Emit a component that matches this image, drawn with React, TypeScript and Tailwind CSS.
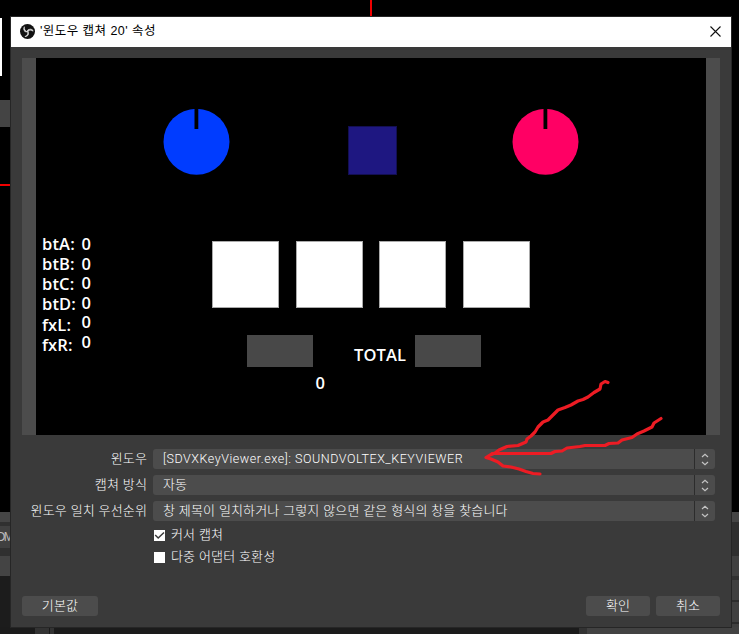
import React from "react";

const UI_FONT = "font-['Liberation_Sans','Noto_Sans_CJK_KR',sans-serif]";

const counters = [
  { name: "btA:", label: "top-[177px]", value: "top-[177px]" },
  { name: "btB:", label: "top-[197px]", value: "top-[197px]" },
  { name: "btC:", label: "top-[217px]", value: "top-[216px]" },
  { name: "btD:", label: "top-[237px]", value: "top-[236px]" },
  { name: "fxL:", label: "top-[258px]", value: "top-[255px]" },
  { name: "fxR:", label: "top-[278px]", value: "top-[275px]" },
];

function ObsLogo() {
  return (
    <svg viewBox="0 0 24 24" className="size-[15px]">
      <circle cx="12" cy="12" r="12" fill="#111" />
      <g fill="none" stroke="#d8d8d8" strokeWidth="1.8" strokeLinecap="round">
        <path d="M12.500 12.500C8.500 12 6 9 6.800 5" />
        <path d="M12.500 12.500C8.500 12 6 9 6.800 5" transform="rotate(120 12 12)" />
        <path d="M12.500 12.500C8.500 12 6 9 6.800 5" transform="rotate(240 12 12)" />
      </g>
      <g fill="#d4d4d4">
        <path d="M6 5C6 9 8 12.500 12 12.500C9 14.500 3.800 10.500 6 5Z" />
        <path d="M6 5C6 9 8 12.500 12 12.500C9 14.500 3.800 10.500 6 5Z" transform="rotate(120 12 12)" />
        <path d="M6 5C6 9 8 12.500 12 12.500C9 14.500 3.800 10.500 6 5Z" transform="rotate(240 12 12)" />
      </g>
    </svg>
  );
}

function Knob({ color, className }: { color: string; className: string }) {
  return (
    <svg viewBox="0 0 67 67" className={`absolute size-[67px] ${className}`}>
      <circle cx="33.500" cy="33.700" r="33" fill={color} />
      <path d="M31.500 0H35.300V21H31.500Z" fill="#000" />
    </svg>
  );
}

/* Main window showing through behind the dialog. */
function Backdrop() {
  return (
    <div className="absolute inset-0 bg-black">
      <div className="absolute left-[370px] top-0 h-4 w-[2px] bg-[#f00000]" />
      <div className="absolute left-0 top-[18px] h-[58px] w-[2px] bg-white" />
      <div className="absolute left-0 top-[100px] h-[27px] w-[11px] bg-[#444]" />
      <div className="absolute left-0 top-[184px] h-[2px] w-[11px] bg-[#f00000]" />
      <div className="absolute left-0 top-[512px] flex h-[122px] w-[11px] flex-col bg-[#1c1c1c]">
        <div className="h-[10px] shrink-0 bg-[#454545]" />
        <div className="h-1 shrink-0 bg-[#303030]" />
        <div className="flex h-[22px] shrink-0 items-center bg-[#404040] text-[12px] tracking-[-1.5px] text-[#bbb]">
          <span className="-ml-[4px]">OM</span>
        </div>
        <div className="h-2 shrink-0 bg-[#303030]" />
        <div className="h-5 shrink-0 bg-[#444]" />
      </div>
      <div className="absolute left-[731px] top-[512px] flex h-[122px] w-2 flex-col bg-[#2f2f2f]">
        <div className="h-[10px] shrink-0 bg-[#454545]" />
        <div className="h-[34px] shrink-0 bg-[#2f2f2f]" />
        <div className="h-5 shrink-0 bg-[#404040]" />
        <div className="h-1 shrink-0 bg-[#303030]" />
        <div className="h-5 shrink-0 bg-[#404040]" />
        <div className="h-[2px] shrink-0 bg-[#2c2c2c]" />
        <div className="h-5 shrink-0 bg-[#404040]" />
        <div className="h-[2px] shrink-0 bg-[#2c2c2c]" />
        <div className="h-[10px] shrink-0 bg-[#404040]" />
      </div>
      <div className="absolute left-0 top-[627px] flex h-[7px] w-[739px] bg-[#1b1b1b]">
        <div className="ml-[35px] w-[14px] bg-[#333]" />
        <div className="ml-px w-1 bg-[#333]" />
        <div className="ml-[525px] w-2 bg-[#333]" />
        <div className="flex-1 bg-[#424242]" />
      </div>
    </div>
  );
}

/* Captured key viewer: a free canvas with placed sources. */
function Preview() {
  return (
    <div className="flex h-[377px] justify-center bg-[#4c4c4c]">
      <div className="relative w-[670px] bg-black font-['Open_Sans','Noto_Sans',sans-serif] text-[16.5px] leading-[18px] font-semibold text-white">
        <Knob color="#003cff" className="left-[127px] top-[50px]" />
        <Knob color="#ff0064" className="left-[476px] top-[50px]" />
        <div className="absolute left-[312px] top-[68px] size-[49px] border border-[#130f52] bg-[#1e1781]" />
        {counters.map((c) => (
          <React.Fragment key={c.name}>
            <span className={`absolute left-[6px] ${c.label}`}>{c.name}</span>
            <span className={`absolute left-[45.5px] ${c.value}`}>0</span>
          </React.Fragment>
        ))}
        <div className="absolute left-[176px] top-[183px] flex gap-[16.7px]">
          <div className="size-[67px] border border-[#aaa] bg-white" />
          <div className="size-[67px] border border-[#aaa] bg-white" />
          <div className="size-[67px] border border-[#aaa] bg-white" />
          <div className="size-[67px] border border-[#aaa] bg-white" />
        </div>
        <div className="absolute left-[211px] top-[277px] h-[32px] w-[66px] bg-[#484848]" />
        <div className="absolute left-[379px] top-[277px] h-[32px] w-[66px] bg-[#484848]" />
        <span className="absolute left-[318px] top-[288px]">TOTAL</span>
        <span className="absolute left-[279.5px] top-[316px]">0</span>
      </div>
    </div>
  );
}

function SelectRow({ label, children }: { label: string; children: React.ReactNode }) {
  return (
    <div className="flex h-5 items-center">
      <div className="flex w-[125px] justify-end whitespace-nowrap">{label}</div>
      <div className="ml-[6px] flex h-5 w-[562px] overflow-hidden rounded-[3px] bg-[#4c4c4c]">
        <div className="flex flex-1 items-center pl-[10px] whitespace-nowrap">{children}</div>
        <div className="flex w-[21px] items-center justify-center border-l border-[#2c2c2c]">
          <svg viewBox="0 0 8 14" className="h-[14px] w-2" fill="none" stroke="#c4c4c4" strokeWidth="1.2">
            <path d="M1 5L4 2.300L7 5M1 10L4 12.700L7 10" />
          </svg>
        </div>
      </div>
    </div>
  );
}

function CheckRow({ checked, label }: { checked?: boolean; label: string }) {
  return (
    <div className="flex h-[22px] items-center gap-[6px]">
      <div className="size-[11px] bg-white">
        {checked && (
          <svg viewBox="0 0 11 11" className="size-[11px]" fill="none" stroke="#3a3a3a" strokeWidth="1.500">
            <path d="M1.200 5L4.200 8L10 2.500" />
          </svg>
        )}
      </div>
      <span>{label}</span>
    </div>
  );
}

function Button({ className, children }: { className: string; children: React.ReactNode }) {
  return (
    <button className={`flex h-5 items-center justify-center rounded-[3px] bg-[#4c4c4c] pb-px ${className}`}>
      {children}
    </button>
  );
}

export default function App() {
  return (
    <div className={`relative h-[634px] w-[739px] overflow-hidden bg-black ${UI_FONT}`}>
      <Backdrop />
      <div className="absolute left-[11px] top-[17px] flex h-[610px] w-[720px] flex-col bg-[#3a3a3a] shadow-[0_0_0_1px_#262626]">
        <div className="flex h-[30px] items-center bg-white pr-[10px] pb-px pl-[9px] text-black">
          <ObsLogo />
          <span className="ml-[5px] flex-1 text-[12.500px] tracking-[0.45px]">'윈도우 캡쳐 20' 속성</span>
          <svg viewBox="0 0 11 11" className="size-[11px]" stroke="#111" strokeWidth="1.1">
            <path d="M.5 .5L10.500 10.500M10.500 .5L.5 10.500" />
          </svg>
        </div>
        <div className="flex flex-1 flex-col px-[11px] pt-[11px] text-[13px] leading-5 font-light tracking-[0.14px] text-white">
          <Preview />
          <div className="mt-[14px] flex flex-col gap-[6px]">
            <SelectRow label="윈도우">
              <span className="font-['Roboto',sans-serif] text-[12.5px] font-light tracking-[0.54px]">[SDVXKeyViewer.exe]: SOUNDVOLTEX_KEYVIEWER</span>
            </SelectRow>
            <SelectRow label="캡쳐 방식">자동</SelectRow>
            <SelectRow label="윈도우 일치 우선순위">창 제목이 일치하거나 그렇지 않으면 같은 형식의 창을 찾습니다</SelectRow>
          </div>
          <div className="mt-[3px] ml-[132px]">
            <CheckRow checked label="커서 캡쳐" />
            <CheckRow label="다중 어댑터 호환성" />
          </div>
          <div className="mt-[28px] flex">
            <Button className="w-[76px]">기본값</Button>
            <Button className="ml-auto w-16">확인</Button>
            <Button className="ml-[6px] w-16">취소</Button>
          </div>
        </div>
      </div>
      {/* Hand-drawn arrow over the window selector. */}
      <svg
        viewBox="480 375 190 105"
        className="absolute left-[480px] top-[375px] h-[105px] w-[190px]"
        fill="none"
        stroke="#ed1c24"
        strokeWidth="3.2"
        strokeLinejoin="round"
        strokeLinecap="round"
      >
        <path d="M608 382.500L605 381.500L601 384L600 389L594 392.500L588 397L583 399.500L578 401L571 405L565 407.500L558 410L553 415L548 420L543 422L538 427L535 432L531 436L527 439L526 442L518 445.500L507 446.500L499 450L495 453L490 455L486 457.500L491 459L498 462L503 466L511 467L519 469L526 471.500L533 473.500L540 474" />
        <path d="M492 453.500H551L555 451.500L562 451L567 448L580 446.500L585 445.500H605L609 443.500L618 443L622 440L632 437.500L637 434L644 431L652 427L654 423L661 418.500" />
      </svg>
    </div>
  );
}
